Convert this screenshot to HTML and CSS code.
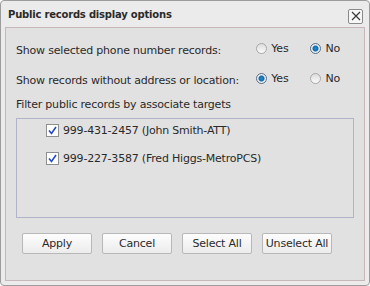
FILE: index.html
```html
<!DOCTYPE html>
<html>
  <head>
    <link rel="stylesheet" href="styles.css">
  </head>
  <body>
    <div class='dialog'>
      <div class='titlebar'>
        <span class='title'>Public records display options</span>
        <a href='#' class='close'>
          <svg width="10" height="10" viewBox="0 0 10 10"><path d="M1 1L9 9M9 1L1 9" stroke="#333" stroke-width="1.1"/></svg>
        </a>
      </div>
      <div class='panel'>
        <div class='row'>
          <span class='label'>Show selected phone number records:</span>
          <span class='choices'>
            <label class='radio'><span class='dot'></span>Yes</label>
            <label class='radio'><span class='dot on'></span>No</label>
          </span>
        </div>
        <div class='row'>
          <span class='label'>Show records without address or location:</span>
          <span class='choices'>
            <label class='radio'><span class='dot on'></span>Yes</label>
            <label class='radio'><span class='dot'></span>No</label>
          </span>
        </div>
        <div class='filter'>Filter public records by associate targets</div>
        <div class='targets'>
          <label class='check'><span class='box'><svg width="9" height="9" viewBox="0 0 9 9"><path d="M1 4.5L3.5 7.5L8 1" fill="none" stroke="#2449c8" stroke-width="1.6"/></svg></span>999-431-2457 (John Smith-ATT)</label>
          <label class='check'><span class='box'><svg width="9" height="9" viewBox="0 0 9 9"><path d="M1 4.5L3.5 7.5L8 1" fill="none" stroke="#2449c8" stroke-width="1.6"/></svg></span>999-227-3587 (Fred Higgs-MetroPCS)</label>
        </div>
        <div class='buttons'>
          <button>Apply</button>
          <button>Cancel</button>
          <button>Select All</button>
          <button>Unselect All</button>
        </div>
      </div>
    </div>
  </body>
</html>
```

FILE: styles.css
```css
body{
  margin:0;
  font-family:'DejaVu Sans', Verdana, sans-serif;
  font-size:11px;
  letter-spacing:-0.2px;
  color:#2a2a2a;
}

.dialog{
  width:368px;
  height:284px;
  border:1px solid #9c9c9c;
  border-radius:4px;
  background-color:#ebebeb;
  display:flex;
  flex-direction:column;
}

.titlebar{
  height:26px;
  display:flex;
  align-items:center;
  justify-content:space-between;
  padding:0 6px 0 7px;
}

.title{
  font-weight:bold;
  font-size:10px;
  letter-spacing:-0.2px;
}

.close{
  width:13px;
  height:13px;
  border:1px solid #8a8a8a;
  border-radius:2px;
  background-color:#f6f6f6;
  display:flex;
  align-items:center;
  justify-content:center;
  margin-top:4px;
}

.panel{
  flex:1;
  margin:0 4px 4px 4px;
  border:1px solid #c9b6b9;
  background-color:#e1e1e1;
  padding:5px 10px 0 10px;
}

.row{
  display:flex;
  justify-content:space-between;
  align-items:center;
  height:30px;
}

.label{
  margin-top:4px;
}

.choices{
  display:flex;
  gap:22px;
  margin-right:14px;
}

.radio{
  display:flex;
  align-items:center;
  gap:4px;
}

.dot{
  width:11px;
  height:11px;
  border-radius:50%;
  border:1px solid #a8a8a8;
  background:linear-gradient(#dcdcdc, #fbfbfb);
  box-sizing:border-box;
}

.dot.on{
  border-color:#5a6f86;
  background:radial-gradient(circle, #1f8fd8 0, #1468a8 2.5px, #e8eef4 3.5px);
}

.filter{
  margin-top:5px;
  height:20px;
}

.targets{
  height:93px;
  border:1px solid #b0b4c8;
  padding:5px 0 0 29px;
  display:flex;
  flex-direction:column;
  gap:15px;
}

.check{
  display:flex;
  align-items:center;
  gap:4px;
}

.box{
  width:11px;
  height:11px;
  border:1px solid #8e8f8f;
  background-color:#fff;
  display:flex;
  align-items:center;
  justify-content:center;
}

.buttons{
  display:flex;
  gap:10px;
  padding:15px 0 0 6px;
}

.buttons button{
  width:70px;
  height:21px;
  font-family:'DejaVu Sans', Verdana, sans-serif;
  font-size:11px;
  letter-spacing:-0.2px;
  color:#2a2a2a;
  border:1px solid #b8b8b8;
  border-radius:2px;
  background:linear-gradient(#fdfdfd, #ececec);
  padding:0;
}
```
